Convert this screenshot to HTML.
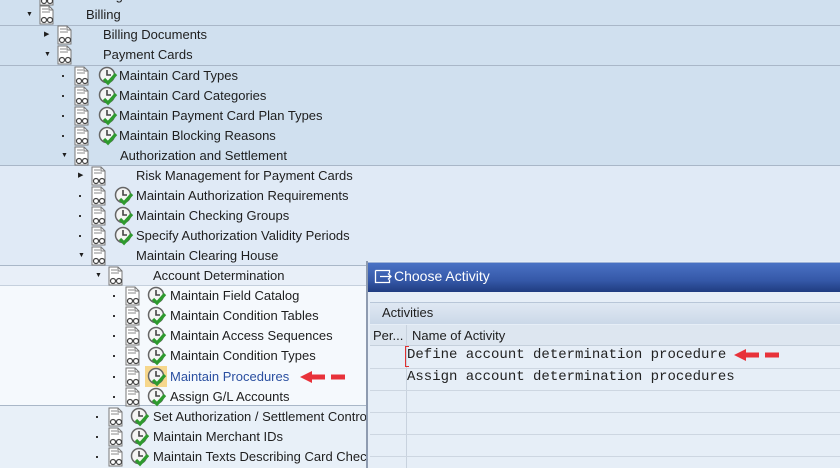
<!DOCTYPE html>
<html><head><meta charset="utf-8"><style>
*{margin:0;padding:0;box-sizing:border-box}
body{width:840px;height:468px;overflow:hidden;position:relative;font-family:"Liberation Sans",Tahoma,sans-serif;font-size:13px;color:#1e1e1e;background:#d0e0ef}
.band{position:absolute;left:0;width:840px}
.line{position:absolute;left:0;width:840px;height:1px;background:#a9b7c8}
.row{position:absolute;height:20px;line-height:20px;white-space:nowrap}
.dot{position:absolute;width:2px;height:2px;background:#333}
svg{position:absolute}
.dlg{position:absolute;left:366px;top:261px;width:474px;height:207px;background:#e6eef7;border-left:2px solid #8e9bb0}
.mono{position:absolute;left:39px;font-family:'Liberation Mono',monospace;font-size:14px;color:#222}
</style></head><body>
<div class="band" style="top:165px;height:100px;background:#e0eaf6"></div>
<div class="band" style="top:265px;height:20px;background:#e8eff8"></div>
<div class="band" style="top:285px;height:121px;background:#f5f9fd"></div>
<div class="band" style="top:406px;height:62px;background:#e8f0f8"></div>
<div class="line" style="top:25px"></div>
<div class="line" style="top:65px"></div>
<div class="line" style="top:165px"></div>
<div class="line" style="top:265px"></div>
<div class="line" style="top:285px;background:#c5d0dd"></div>
<div class="line" style="top:405px"></div>

<svg width="0" height="0" style="position:absolute"><defs>
<symbol id="doc" viewBox="0 0 18 20"><path d="M2 1h9l4 4v14H2z" fill="#fff" stroke="#777" stroke-width="1"/><path d="M4 4h6M4 7h8" stroke="#888"/><path d="M11 1v4h4" fill="none" stroke="#777"/><circle cx="6" cy="15" r="2.5" fill="none" stroke="#444" stroke-width="1.2"/><circle cx="12" cy="15" r="2.5" fill="none" stroke="#444" stroke-width="1.2"/><path d="M8.5 15h1" stroke="#444"/></symbol>
<symbol id="clk" viewBox="0 0 20 20"><circle cx="9" cy="9" r="7.5" fill="#f4f4f4" stroke="#666" stroke-width="1.5"/><path d="M9 4v5h4" fill="none" stroke="#444" stroke-width="1.6"/><path d="M6 13l4 4 8-9" fill="none" stroke="#2e9a2e" stroke-width="3.2"/></symbol>
</defs></svg>

<div id="tree"></div>
<script>
var R=[
[-4,null,38,86,"Foreign Trade/Customs",0],
[15,"▼",38,86,"Billing",0],
[35,"▶",56,103,"Billing Documents",0],
[55,"▼",56,103,"Payment Cards",0],
[76,".",73,119,"Maintain Card Types",98],
[96,".",73,119,"Maintain Card Categories",98],
[116,".",73,119,"Maintain Payment Card Plan Types",98],
[136,".",73,119,"Maintain Blocking Reasons",98],
[156,"▼",73,120,"Authorization and Settlement",0],
[176,"▶",90,136,"Risk Management for Payment Cards",0],
[196,".",90,136,"Maintain Authorization Requirements",114],
[216,".",90,136,"Maintain Checking Groups",114],
[236,".",90,136,"Specify Authorization Validity Periods",114],
[256,"▼",90,136,"Maintain Clearing House",0],
[276,"▼",107,153,"Account Determination",0],
[296,".",124,170,"Maintain Field Catalog",147],
[316,".",124,170,"Maintain Condition Tables",147],
[336,".",124,170,"Maintain Access Sequences",147],
[356,".",124,170,"Maintain Condition Types",147],
[377,".",124,170,"Maintain Procedures",147],
[397,".",124,170,"Assign G/L Accounts",147],
[417,".",107,153,"Set Authorization / Settlement Control",130],
[437,".",107,153,"Maintain Merchant IDs",130],
[457,".",107,153,"Maintain Texts Describing Card Checks",130]];
var h="";
R.forEach(function(r){var t=r[0]-10;
if(r[1]==".")h+='<div class="dot" style="left:'+(r[2]-11)+'px;top:'+(t+9)+'px"></div>';
else if(r[1])h+='<div class="row" style="left:'+(r[2]-12)+'px;top:'+t+'px;font-size:7px">'+r[1]+'</div>';
h+='<svg width="18" height="20" style="left:'+r[2]+'px;top:'+t+'px"><use href="#doc"/></svg>';
if(r[5]){if(r[4]=="Maintain Procedures")h+='<div style="position:absolute;left:145px;top:366px;width:22px;height:21px;background:#f6d78c"></div>';
h+='<svg width="20" height="20" style="left:'+r[5]+'px;top:'+t+'px"><use href="#clk"/></svg>';}
h+='<div class="row" style="left:'+r[3]+'px;top:'+t+'px;'+(r[4]=="Maintain Procedures"?'color:#2a4fa0':'')+'">'+r[4]+'</div>';});
document.getElementById("tree").innerHTML=h;
</script>
<svg width="60" height="14" style="left:298px;top:370px"><path d="M2 7l12-6v12z" fill="#e8323a"/><rect x="13" y="4.5" width="14" height="5" fill="#e8323a"/><rect x="33" y="4.5" width="14" height="5" fill="#e8323a"/></svg>

<div class="dlg">
<div style="position:absolute;left:0;top:1px;width:472px;height:30px;background:linear-gradient(#4a72c4,#3558a8 60%,#1f3c80);border-top:1px solid #9fb4d8"></div>
<svg width="20" height="16" style="left:6px;top:8px"><path d="M1.5 1.5h14v3M1.5 1.5v12h14v-3" fill="none" stroke="#fff" stroke-width="1.3"/><path d="M6 7.5h11M14 4.5l3 3-3 3" fill="none" stroke="#fff" stroke-width="1.3"/></svg>
<div style="position:absolute;left:26px;top:7px;color:#fff;font-size:14px">Choose Activity</div>
<div style="position:absolute;left:2px;top:41px;width:470px;height:22px;background:linear-gradient(#dfe8f3,#cbd8e8);border-top:1px solid #b8c6d8"></div>
<div style="position:absolute;left:14px;top:44px;font-size:13px">Activities</div>
<div style="position:absolute;left:2px;top:64px;width:470px;height:21px;background:#dde6f0;border-bottom:1px solid #c5d0dc"></div>
<div style="position:absolute;left:5px;top:67px">Per...</div>
<div style="position:absolute;left:44px;top:67px">Name of Activity</div>
<div style="position:absolute;left:38px;top:64px;width:1px;height:143px;background:#c8d2de"></div>
<div style="position:absolute;left:2px;top:107px;width:470px;height:1px;background:#cdd6e1"></div>
<div style="position:absolute;left:2px;top:129px;width:470px;height:1px;background:#cdd6e1"></div>
<div style="position:absolute;left:2px;top:151px;width:470px;height:1px;background:#cdd6e1"></div>
<div style="position:absolute;left:2px;top:173px;width:470px;height:1px;background:#cdd6e1"></div>
<div style="position:absolute;left:2px;top:195px;width:470px;height:1px;background:#cdd6e1"></div>
<div class="mono" style="top:86px">Define account determination procedure</div>
<div class="mono" style="top:108px">Assign account determination procedures</div>
<div style="position:absolute;left:37px;top:85px;width:4px;height:21px;border:1px solid #e03030;border-right:none"></div>
<svg width="60" height="14" style="left:364px;top:87px"><path d="M2 7l12-6v12z" fill="#e8323a"/><rect x="13" y="4.5" width="14" height="5" fill="#e8323a"/><rect x="33" y="4.5" width="14" height="5" fill="#e8323a"/></svg>
</div>
</body></html>
